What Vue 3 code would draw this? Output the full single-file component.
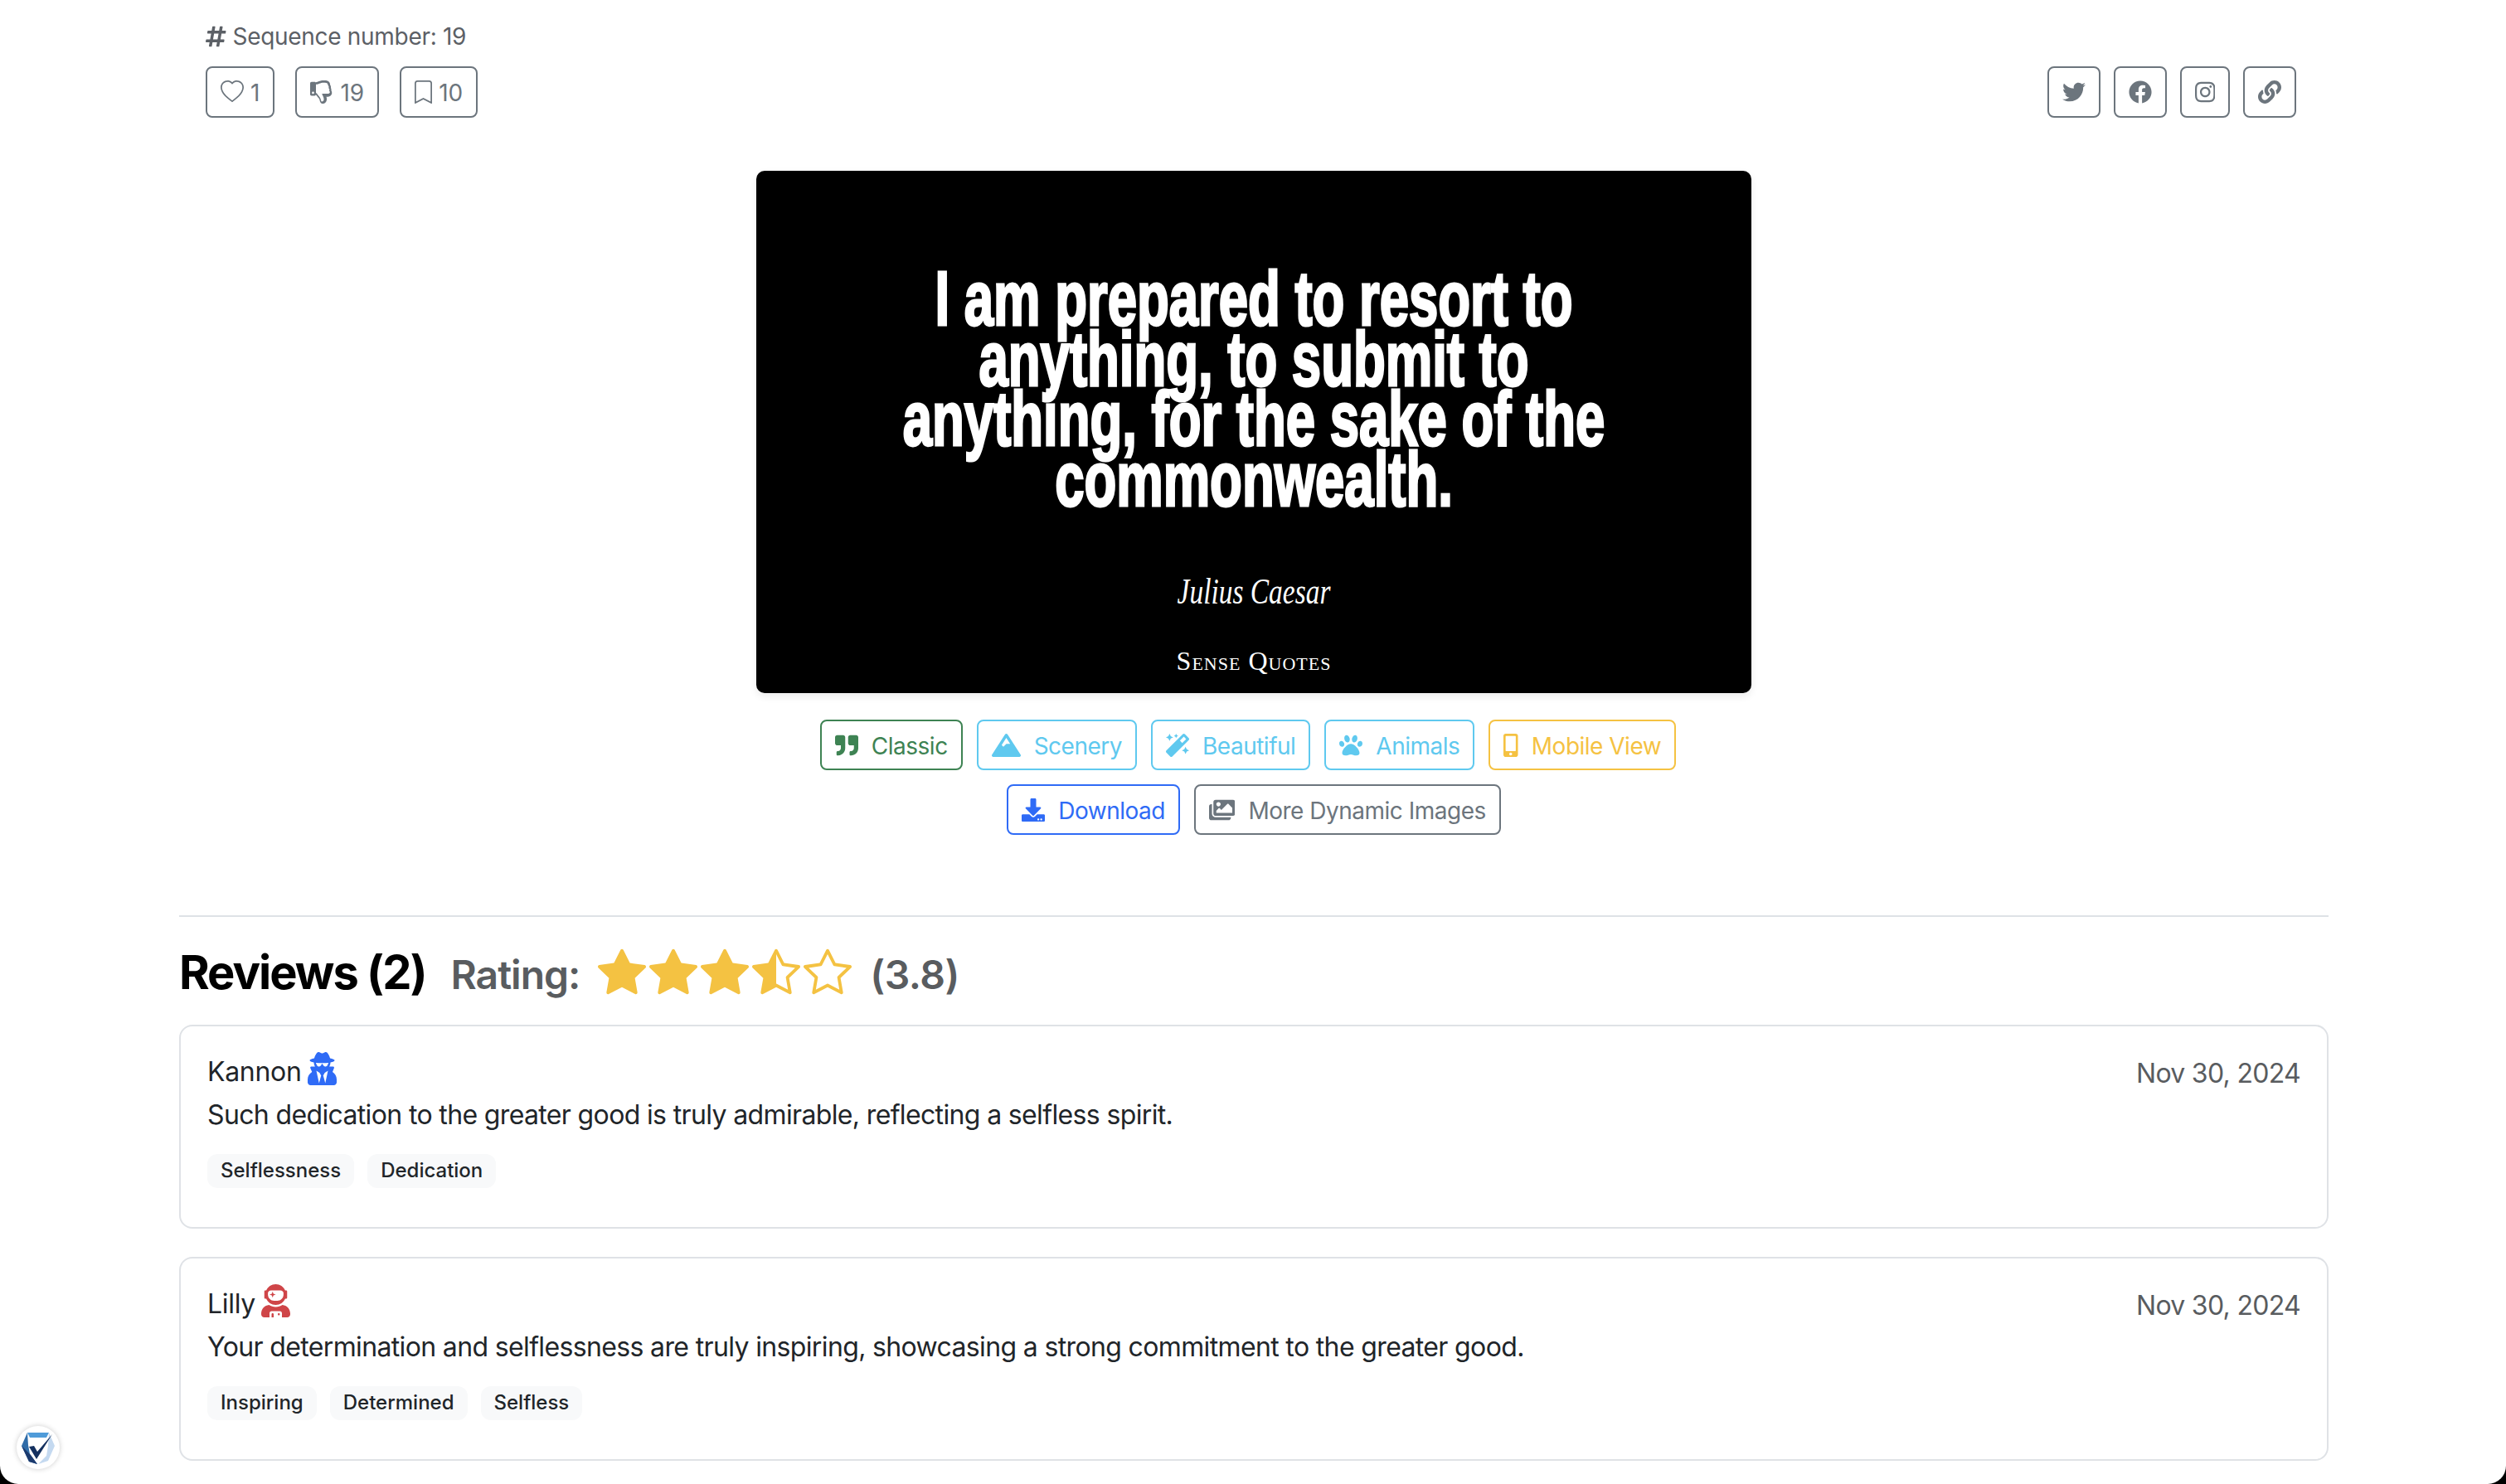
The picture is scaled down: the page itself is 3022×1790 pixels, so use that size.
<script setup>
const icons = {
  hash: [448, 512, 'M440.667 182.109l7.143-40c1.313-7.355-4.342-14.109-11.813-14.109h-74.81l14.623-81.891C377.123 38.754 371.468 32 363.997 32h-40.632a12 12 0 0 0-11.813 9.891L296.175 128H197.54l14.623-81.891C213.477 38.754 207.822 32 200.35 32h-40.632a12 12 0 0 0-11.813 9.891L132.528 128H53.432a12 12 0 0 0-11.813 9.891l-7.143 40C33.163 185.246 38.818 192 46.289 192h74.81L98.242 320H19.146a12 12 0 0 0-11.813 9.891l-7.143 40C-1.123 377.246 4.532 384 12.003 384h74.81L72.19 465.891C70.877 473.246 76.532 480 84.003 480h40.632a12 12 0 0 0 11.813-9.891L151.825 384h98.634l-14.622 81.891C234.523 473.246 240.178 480 247.65 480h40.632a12 12 0 0 0 11.813-9.891L315.472 384h79.096a12 12 0 0 0 11.813-9.891l7.143-40c1.313-7.355-4.342-14.109-11.813-14.109h-74.81l22.857-128h79.096a12 12 0 0 0 11.813-9.891zM261.889 320h-98.634l22.857-128h98.634l-22.857 128z'],
  heart: [16, 16, 'm8 2.748-.717-.737C5.6.281 2.514.878 1.4 3.053c-.523 1.023-.641 2.5.314 4.385.92 1.815 2.834 3.989 6.286 6.357 3.452-2.368 5.365-4.542 6.286-6.357.955-1.886.838-3.362.314-4.385C13.486.878 10.4.28 8.717 2.01L8 2.748zM8 15C-7.333 4.868 3.279-3.04 7.824 1.143c.06.055.119.112.176.171a3.12 3.12 0 0 1 .176-.17C12.72-3.042 23.333 4.867 8 15z'],
  thumbsDown: [512, 512, 'M466.27 225.31c4.674-22.647.864-44.538-8.99-62.99 2.958-23.868-4.021-48.565-17.34-66.99C438.986 39.423 404.117 0 327 0c-7 0-15 .01-22.22.01C201.195.01 168.997 40 128 40h-10.845c-5.64-4.975-13.042-8-21.155-8H32C14.327 32 0 46.327 0 64v240c0 17.673 14.327 32 32 32h64c11.842 0 22.175-6.438 27.708-16h7.052c19.146 16.953 46.013 60.653 68.76 83.4 13.667 13.667 10.153 108.6 71.76 108.6 57.58 0 95.27-31.936 95.27-104.73 0-18.41-3.93-33.73-8.85-46.54h36.48c48.602 0 85.82-41.565 85.82-85.58 0-19.15-4.96-34.99-13.73-49.84zM64 296c-13.255 0-24-10.745-24-24s10.745-24 24-24 24 10.745 24 24-10.745 24-24 24zM128 272V88h10.8c42 0 78-40 166-40H327c46 0 66 18 66 56 16 14 24 38 14 64 18 14 26 40 12 60 18 14 20 36 12 48-8 10-20 17-36 17H262c0 30 40 62 40 118 0 30-12 57-46 57-16 0-18-68-42-95-26-26-54-70-76-92H128z'],
  bookmark: [12, 16, 'M0 2a2 2 0 0 1 2-2h8a2 2 0 0 1 2 2v13.5a.5.5 0 0 1-.777.416L6 13.101.777 15.916A.5.5 0 0 1 0 15.5V2zm2-1a1 1 0 0 0-1 1v12.566l4.723-2.482a.5.5 0 0 1 .554 0L11 14.566V2a1 1 0 0 0-1-1H2z'],
  twitter: [512, 512, 'M459.37 151.716c.325 4.548.325 9.097.325 13.645 0 138.72-105.583 298.558-298.558 298.558-59.452 0-114.68-17.219-161.137-47.106 8.447.974 16.568 1.299 25.34 1.299 49.055 0 94.213-16.568 130.274-44.832-46.132-.975-84.792-31.188-98.112-72.772 6.498.974 12.995 1.624 19.818 1.624 9.421 0 18.843-1.3 27.614-3.573-48.081-9.747-84.143-51.98-84.143-102.985v-1.299c13.969 7.797 30.214 12.67 47.431 13.319-28.264-18.843-46.781-51.005-46.781-87.391 0-19.492 5.197-37.36 14.294-52.954 51.655 63.675 129.3 105.258 216.365 109.807-1.624-7.797-2.599-15.918-2.599-24.04 0-57.828 46.782-104.934 104.934-104.934 30.213 0 57.502 12.67 76.67 33.137 23.715-4.548 46.456-13.32 66.599-25.34-7.798 24.366-24.366 44.833-46.132 57.827 21.117-2.273 41.584-8.122 60.426-16.243-14.292 20.791-32.161 39.308-52.628 54.253z'],
  facebook: [512, 512, 'M504 256C504 119 393 8 256 8S8 119 8 256c0 123.78 90.69 226.38 209.25 245V327.69h-63V256h63v-54.64c0-62.15 37-96.48 93.67-96.48 27.14 0 55.52 4.84 55.52 4.84v61h-31.28c-30.8 0-40.41 19.12-40.41 38.73V256h68.78l-11 71.69h-57.78V501C413.31 482.38 504 379.78 504 256z'],
  instagram: [448, 512, 'M224.1 141c-63.6 0-114.9 51.3-114.9 114.9s51.3 114.9 114.9 114.9S339 319.5 339 255.9 287.7 141 224.1 141zm0 189.6c-41.1 0-74.7-33.5-74.7-74.7s33.5-74.7 74.7-74.7 74.7 33.5 74.7 74.7-33.6 74.7-74.7 74.7zm146.4-194.3c0 14.9-12 26.8-26.8 26.8-14.9 0-26.8-12-26.8-26.8s12-26.8 26.8-26.8 26.8 12 26.8 26.8zm76.1 27.2c-1.7-35.9-9.9-67.7-36.2-93.9-26.2-26.2-58-34.4-93.9-36.2-37-2.1-147.9-2.1-184.9 0-35.8 1.7-67.6 9.9-93.9 36.1s-34.4 58-36.2 93.9c-2.1 37-2.1 147.9 0 184.9 1.7 35.9 9.9 67.7 36.2 93.9s58 34.4 93.9 36.2c37 2.1 147.9 2.1 184.9 0 35.9-1.7 67.7-9.9 93.9-36.2 26.2-26.2 34.4-58 36.2-93.9 2.1-37 2.1-147.8 0-184.8zM398.8 388c-7.8 19.6-22.9 34.7-42.6 42.6-29.5 11.7-99.5 9-132.1 9s-102.7 2.6-132.1-9c-19.6-7.8-34.7-22.9-42.6-42.6-11.7-29.5-9-99.5-9-132.1s-2.6-102.7 9-132.1c7.8-19.6 22.9-34.7 42.6-42.6 29.5-11.7 99.5-9 132.1-9s102.7-2.6 132.1 9c19.6 7.8 34.7 22.9 42.6 42.6 11.7 29.5 9 99.5 9 132.1s2.7 102.7-9 132.1z'],
  link: [512, 512, 'M326.612 185.391c59.747 59.809 58.927 155.698.36 214.59-.11.12-.24.25-.36.37l-67.2 67.2c-59.27 59.27-155.699 59.262-214.96 0-59.27-59.26-59.27-155.7 0-214.96l37.106-37.106c9.84-9.84 26.786-3.3 27.294 10.606.648 17.722 3.826 35.527 9.69 52.721 1.986 5.822.567 12.262-3.783 16.612l-13.087 13.087c-28.026 28.026-28.905 73.66-1.155 101.96 28.024 28.579 74.086 28.749 102.325.51l67.2-67.19c28.191-28.191 28.073-73.757 0-101.83-3.701-3.694-7.429-6.564-10.341-8.569a16.037 16.037 0 0 1-6.947-12.606c-.396-10.567 3.348-21.456 11.698-29.806l21.054-21.055c5.521-5.521 14.182-6.199 20.584-1.731a152.482 152.482 0 0 1 20.522 17.197zM467.547 44.449c-59.261-59.262-155.69-59.27-214.96 0l-67.2 67.2c-.12.12-.25.25-.36.37-58.566 58.892-59.387 154.781.36 214.59a152.454 152.454 0 0 0 20.521 17.196c6.402 4.468 15.064 3.789 20.584-1.731l21.054-21.055c8.35-8.35 12.094-19.239 11.698-29.806a16.037 16.037 0 0 0-6.947-12.606c-2.912-2.005-6.64-4.875-10.341-8.569-28.073-28.073-28.191-73.639 0-101.83l67.2-67.19c28.239-28.239 74.3-28.069 102.325.51 27.75 28.3 26.872 73.934-1.155 101.96l-13.087 13.087c-4.35 4.35-5.769 10.79-3.783 16.612 5.864 17.194 9.042 34.999 9.69 52.721.509 13.906 17.454 20.446 27.294 10.606l37.106-37.106c59.271-59.259 59.271-155.699.001-214.959z'],
  quote: [512, 512, 'M464 32H336c-26.5 0-48 21.5-48 48v128c0 26.5 21.5 48 48 48h80v64c0 35.3-28.7 64-64 64h-8c-13.3 0-24 10.7-24 24v48c0 13.3 10.7 24 24 24h8c88.4 0 160-71.6 160-160V80c0-26.5-21.5-48-48-48zm-288 0H48C21.5 32 0 53.5 0 80v128c0 26.5 21.5 48 48 48h80v64c0 35.3-28.7 64-64 64h-8c-13.3 0-24 10.7-24 24v48c0 13.3 10.7 24 24 24h8c88.4 0 160-71.6 160-160V80c0-26.5-21.5-48-48-48z'],
  mountain: [640, 512, 'M634.92 462.7l-288-448C341.03 5.54 330.89 0 320 0s-21.03 5.54-26.92 14.7l-288 448a32.001 32.001 0 0 0-1.17 32.64A32.004 32.004 0 0 0 32 512h576c11.71 0 22.48-6.39 28.09-16.67a31.983 31.983 0 0 0-1.17-32.63zM320 91.18L405.39 224H320l-64 64-38.06-38.06L320 91.18z'],
  magic: [512, 512, 'M224 96l16-32 32-16-32-16-16-32-16 32-32 16 32 16 16 32zM80 160l26.66-53.33L160 80l-53.34-26.67L80 0 53.34 53.33 0 80l53.34 26.67L80 160zm352 128l-26.66 53.33L352 368l53.34 26.67L432 448l26.66-53.33L512 368l-53.34-26.67L432 288zm70.62-193.77L417.77 9.38C411.53 3.12 403.34 0 395.15 0c-8.19 0-16.38 3.12-22.63 9.38L9.38 372.52c-12.5 12.5-12.5 32.76 0 45.25l84.85 84.85c6.25 6.25 14.44 9.37 22.62 9.37 8.19 0 16.38-3.12 22.63-9.37l363.14-363.15c12.5-12.48 12.5-32.75 0-45.24zM359.45 203.46l-50.91-50.91 86.6-86.6 50.91 50.91-86.6 86.6z'],
  paw: [512, 512, 'M256 224c-79.41 0-192 122.76-192 200.25 0 34.9 26.81 55.75 71.74 55.75 48.84 0 81.09-25.08 120.26-25.08 39.51 0 71.85 25.08 120.26 25.08 44.93 0 71.74-20.85 71.74-55.75C448 346.76 335.41 224 256 224zm-147.28-12.61c-10.4-34.65-42.44-57.09-71.56-50.13-29.12 6.96-44.29 40.69-33.89 75.34 10.4 34.65 42.44 57.09 71.56 50.13 29.12-6.96 44.29-40.69 33.89-75.34zm84.72-20.78c30.94-8.14 46.42-49.94 34.58-93.36s-46.52-72.01-77.46-63.87-46.42 49.94-34.58 93.36c11.84 43.42 46.52 72.02 77.46 63.87zm281.39-29.34c-29.12-6.96-61.15 15.48-71.56 50.13-10.4 34.65 4.77 68.38 33.89 75.34 29.12 6.96 61.15-15.48 71.56-50.13 10.4-34.65-4.77-68.38-33.89-75.34zm-156.27 29.34c30.94 8.14 65.62-20.45 77.46-63.87 11.84-43.42-3.64-85.21-34.58-93.36s-65.62 20.45-77.46 63.87c-11.84 43.42 3.64 85.22 34.58 93.36z'],
  mobile: [320, 512, 'M272 0H48C21.5 0 0 21.5 0 48v416c0 26.5 21.5 48 48 48h224c26.5 0 48-21.5 48-48V48c0-26.5-21.5-48-48-48zM160 480c-17.7 0-32-14.3-32-32s14.3-32 32-32 32 14.3 32 32-14.3 32-32 32zm112-108c0 6.6-5.4 12-12 12H60c-6.6 0-12-5.4-12-12V60c0-6.6 5.4-12 12-12h200c6.6 0 12 5.4 12 12v312z'],
  download: [512, 512, 'M216 0h80c13.3 0 24 10.7 24 24v168h87.7c17.8 0 26.7 21.5 14.1 34.1L269.7 378.3c-7.5 7.5-19.8 7.5-27.3 0L90.1 226.1c-12.6-12.6-3.7-34.1 14.1-34.1H192V24c0-13.3 10.7-24 24-24zm296 376v112c0 13.3-10.7 24-24 24H24c-13.3 0-24-10.7-24-24V376c0-13.3 10.7-24 24-24h146.7l49 49c20.1 20.1 52.5 20.1 72.6 0l49-49H488c13.3 0 24 10.7 24 24zm-124 88c0-11-9-20-20-20s-20 9-20 20 9 20 20 20 20-9 20-20zm64 0c0-11-9-20-20-20s-20 9-20 20 9 20 20 20 20-9 20-20z'],
  images: [576, 512, 'M480 416v16c0 26.51-21.49 48-48 48H48c-26.51 0-48-21.49-48-48V176c0-26.51 21.49-48 48-48h16v208c0 44.112 35.888 80 80 80h336zm96-80V80c0-26.51-21.49-48-48-48H144c-26.51 0-48 21.49-48 48v256c0 26.51 21.49 48 48 48h384c26.51 0 48-21.49 48-48zM256 128c0 26.51-21.49 48-48 48s-48-21.49-48-48 21.49-48 48-48 48 21.49 48 48zm-96 144l55.515-55.515c4.686-4.686 12.284-4.686 16.971 0L272 256l135.515-135.515c4.686-4.686 12.284-4.686 16.971 0L512 208v112H160v-48z'],
  secret: [448, 512, 'M383.9 308.3l23.9-62.6c4-10.5-3.7-21.7-15-21.7h-58.5c11-18.9 17.8-40.6 17.8-64v-.3c39.2-7.8 64-19.1 64-31.7 0-13.3-27.3-25.1-70.1-33-9.2-32.8-27-65.8-40.6-82.8-9.5-11.9-25.9-15.6-39.5-8.8l-27.6 13.8c-9 4.5-19.6 4.5-28.6 0L182.1 3.4c-13.6-6.8-30-3.1-39.5 8.8-13.5 17-31.4 50-40.6 82.8-42.7 7.9-70 19.7-70 33 0 12.6 24.8 23.9 64 31.7v.3c0 23.4 6.8 45.1 17.8 64H56.3c-11.5 0-19.2 11.7-14.7 22.3l25.8 60.2C27.3 329.8 0 372.7 0 422.4v44.8C0 491.9 20.1 512 44.8 512h358.4c24.7 0 44.8-20.1 44.8-44.8v-44.8c0-48.4-25.8-90.4-64.1-114.1zM176 480l-41.6-192 49.6 32 24 40-32 120zm96 0l-32-120 24-40 49.6-32L272 480zm41.7-298.5c-3.9 11.9-7 24.6-16.5 33.4-10.1 9.3-48 22.4-64-25-2.8-8.4-15.4-8.4-18.3 0-17 50.2-56 32.4-64 25-9.5-8.8-12.7-21.5-16.5-33.4-.8-2.5-6.3-5.7-6.3-5.8v-10.8c28.3 3.6 61 5.8 96 5.8s67.7-2.1 96-5.8v10.8c-.1.1-5.6 3.2-6.4 5.8z'],
  astronaut: [448, 512, 'M64 224h13.5c24.7 56.5 80.9 96 146.5 96s121.8-39.5 146.5-96H384c8.8 0 16-7.2 16-16v-96c0-8.8-7.2-16-16-16h-13.5C345.8 39.5 289.6 0 224 0S102.2 39.5 77.5 96H64c-8.8 0-16 7.2-16 16v96c0 8.8 7.2 16 16 16zm40-88c0-22 21.5-40 48-40h144c26.5 0 48 18 48 40v24c0 53-43 96-96 96h-48c-53 0-96-43-96-96v-24zm72 72l12-36 36-12-36-12-12-36-12 36-36 12 36 12 12 36zm151.6 113.4C297.7 340.7 262.2 352 224 352s-73.7-11.3-103.6-30.6C52.9 328.5 0 385 0 454.4v9.6c0 26.5 21.5 48 48 48h80v-64c0-17.7 14.3-32 32-32h128c17.7 0 32 14.3 32 32v64h80c26.5 0 48-21.5 48-48v-9.6c0-69.4-52.9-125.9-120.4-133zM272 448c-8.8 0-16 7.2-16 16s7.2 16 16 16 16-7.2 16-16-7.2-16-16-16zm-96 0c-8.8 0-16 7.2-16 16v48h32v-48c0-8.8-7.2-16-16-16z'],
  star: [16, 16, 'M3.612 15.443c-.386.198-.824-.149-.746-.592l.83-4.73L.173 6.765c-.329-.314-.158-.888.283-.95l4.898-.696L7.538.792c.197-.39.73-.39.927 0l2.184 4.327 4.898.696c.441.062.612.636.282.95l-3.522 3.356.83 4.73c.078.443-.36.79-.746.592L8 13.187l-4.389 2.256z'],
  starHalf: [16, 16, 'M5.354 5.119 7.538.792A.516.516 0 0 1 8 .5c.183 0 .366.097.465.292l2.184 4.327 4.898.696A.537.537 0 0 1 16 6.32a.548.548 0 0 1-.17.445l-3.523 3.356.83 4.73c.078.443-.36.79-.746.592L8 13.187l-4.389 2.256a.52.52 0 0 1-.146.05c-.342.06-.668-.254-.6-.642l.83-4.73L.173 6.765a.55.55 0 0 1-.172-.403.58.58 0 0 1 .085-.302.513.513 0 0 1 .37-.245l4.898-.696zM8 12.027a.5.5 0 0 1 .232.056l3.686 1.894-.694-3.957a.565.565 0 0 1 .162-.505l2.907-2.77-4.052-.576a.525.525 0 0 1-.393-.288L8.001 2.223 8 2.226v9.8z'],
  starEmpty: [16, 16, 'M2.866 14.85c-.078.444.36.791.746.593l4.39-2.256 4.389 2.256c.386.198.824-.149.746-.592l-.83-4.73 3.522-3.356c.33-.314.16-.888-.282-.95l-4.898-.696L8.465.792a.513.513 0 0 0-.927 0L5.354 5.12l-4.898.696c-.441.062-.612.636-.283.95l3.523 3.356-.83 4.73zm4.905-2.767-3.686 1.894.694-3.957a.565.565 0 0 0-.163-.505L1.71 6.745l4.052-.576a.525.525 0 0 0 .393-.288L8 2.223l1.847 3.658a.525.525 0 0 0 .393.288l4.052.575-2.906 2.77a.565.565 0 0 0-.163.506l.694 3.957-3.686-1.894a.503.503 0 0 0-.461 0z'],
}

const counters = [
  { icon: 'heart', value: 1 },
  { icon: 'thumbsDown', value: 19 },
  { icon: 'bookmark', value: 10 },
]
const shares = ['twitter', 'facebook', 'instagram', 'link']
const styleRow = [
  { icon: 'quote', label: 'Classic', tone: 'green' },
  { icon: 'mountain', label: 'Scenery', tone: 'info' },
  { icon: 'magic', label: 'Beautiful', tone: 'info' },
  { icon: 'paw', label: 'Animals', tone: 'info' },
  { icon: 'mobile', label: 'Mobile View', tone: 'amber' },
]
const actionRow = [
  { icon: 'download', label: 'Download', tone: 'blue' },
  { icon: 'images', label: 'More Dynamic Images', tone: 'grey' },
]
const quoteLines = [
  'I am prepared to resort to',
  'anything, to submit to',
  'anything, for the sake of the',
  'commonwealth.',
]
const stars = ['star', 'star', 'star', 'starHalf', 'starEmpty']
const reviews = [
  {
    name: 'Kannon',
    icon: 'secret',
    tone: 'blue',
    date: 'Nov 30, 2024',
    text: 'Such dedication to the greater good is truly admirable, reflecting a selfless spirit.',
    tags: ['Selflessness', 'Dedication'],
  },
  {
    name: 'Lilly',
    icon: 'astronaut',
    tone: 'red',
    date: 'Nov 30, 2024',
    text: 'Your determination and selflessness are truly inspiring, showcasing a strong commitment to the greater good.',
    tags: ['Inspiring', 'Determined', 'Selfless'],
  },
]

const iconWidth = (name, height) => (icons[name][0] / icons[name][1]) * height
</script>

<template>
  <div class="screen">
    <div class="page">
      <div class="top">
        <div class="seq">
          <svg :viewBox="`0 0 ${icons.hash[0]} ${icons.hash[1]}`" :width="iconWidth('hash', 28)" height="28" fill="currentColor">
            <path :d="icons.hash[2]" />
          </svg>
          <span>Sequence number: 19</span>
        </div>
        <div class="actions">
          <div class="counters">
            <div v-for="c in counters" :key="c.icon" class="square">
              <svg :viewBox="`0 0 ${icons[c.icon][0]} ${icons[c.icon][1]}`" :width="iconWidth(c.icon, 28)" height="28" fill="currentColor" fill-rule="evenodd">
                <path :d="icons[c.icon][2]" />
              </svg>
              <span class="nudge">{{ c.value }}</span>
            </div>
          </div>
          <div class="shares">
            <div v-for="s in shares" :key="s" class="square">
              <svg :viewBox="`0 0 ${icons[s][0]} ${icons[s][1]}`" :width="iconWidth(s, 28)" height="28" fill="currentColor">
                <path :d="icons[s][2]" />
              </svg>
            </div>
          </div>
        </div>
      </div>

      <div class="poster">
        <div class="poster__quote">
          <div v-for="line in quoteLines" :key="line" class="poster__line">
            <span>{{ line }}</span>
          </div>
        </div>
        <div class="poster__author">Julius Caesar</div>
        <div class="poster__brand">Sense Quotes</div>
      </div>

      <div class="btn-rows">
        <div v-for="(row, i) in [styleRow, actionRow]" :key="i" class="btn-row">
          <div v-for="b in row" :key="b.label" class="btn" :class="`tone-${b.tone}`">
            <svg :viewBox="`0 0 ${icons[b.icon][0]} ${icons[b.icon][1]}`" :width="iconWidth(b.icon, 28)" height="28" fill="currentColor">
              <path :d="icons[b.icon][2]" />
            </svg>
            <span class="nudge">{{ b.label }}</span>
          </div>
        </div>
      </div>

      <div class="rule"></div>

      <div class="heading">
        <span class="heading__title">Reviews (2)</span>
        <span class="heading__rating heading__rating--label">Rating:</span>
        <span class="stars">
          <svg v-for="(s, i) in stars" :key="i" viewBox="0 0 16 16" width="58" height="58" fill="currentColor">
            <path :d="icons[s][2]" />
          </svg>
        </span>
        <span class="heading__rating heading__rating--score">(3.8)</span>
      </div>

      <div class="reviews">
        <div v-for="r in reviews" :key="r.name" class="review">
          <div class="review__main">
            <div class="review__name">
              <span>{{ r.name }}</span>
              <svg :class="`tone-${r.tone}`" :viewBox="`0 0 ${icons[r.icon][0]} ${icons[r.icon][1]}`" width="35" height="40" fill="currentColor">
                <path :d="icons[r.icon][2]" />
              </svg>
            </div>
            <div class="review__text">{{ r.text }}</div>
            <div class="review__tags">
              <span v-for="t in r.tags" :key="t" class="tag">{{ t }}</span>
            </div>
          </div>
          <div class="review__date">{{ r.date }}</div>
        </div>
      </div>
    </div>

    <div class="badge">
      <svg viewBox="0 0 52 52" width="52" height="52">
        <path d="M13 8h26l-3 6H16z" fill="#4f9bd9" />
        <path d="M13 8 6 24l9 19 10 3-9-12-2-11z" fill="#2f6ca8" />
        <path d="M39 8l7 16-8 18-12 4 10-10 2-12z" fill="#c4d9f0" />
        <path d="M6 24l9 19 10 3-8-11z" fill="#1c3a6e" />
        <path d="M15 25l9 15L43 10 25 31l-4-7z" fill="#14305f" />
      </svg>
    </div>
    <div class="corners"></div>
  </div>
</template>

<style>
html,
body {
  margin: 0;
  background: #fff;
}
</style>

<style scoped>
.screen {
  position: relative;
  width: 3022px;
  height: 1790px;
  overflow: hidden;
  background: #fff;
  font-family: Inter, "Liberation Sans", sans-serif;
  font-size: 32px;
  color: #212529;
}
.page {
  width: 2592px;
  margin-left: 216px;
}
.top {
  padding: 24px 39px 0 32px;
}
.seq {
  display: flex;
  align-items: center;
  gap: 8px;
  height: 40px;
  margin-bottom: 16px;
  font-size: 28px;
  letter-spacing: -0.3px;
  color: #5c6066;
}
.actions {
  display: flex;
  justify-content: space-between;
}
.counters {
  display: flex;
  gap: 25px;
}
.shares {
  display: flex;
  gap: 16px;
}
.square {
  display: flex;
  align-items: center;
  gap: 8px;
  height: 62px;
  box-sizing: border-box;
  padding: 0 16px;
  border: 2px solid #6c757d;
  border-radius: 8px;
  font-size: 28px;
  color: #6c757d;
}
.nudge {
  padding-top: 2px;
}
.poster {
  box-sizing: border-box;
  width: 1200px;
  height: 630px;
  margin: 64px auto 0;
  padding-top: 118px;
  background: #000;
  border-radius: 10px;
  box-shadow: 0 4px 10px rgba(0, 0, 0, 0.08);
  color: #fff;
  text-align: center;
}
.poster__line {
  display: flex;
  justify-content: center;
  font-family: "Liberation Sans", sans-serif;
  font-weight: 700;
  font-size: 92px;
  line-height: 72.5px;
  white-space: nowrap;
  transform: scaleX(0.69);
  -webkit-text-stroke: 3px #fff;
}
.poster__author {
  margin-top: 70px;
  font-family: "Liberation Serif", serif;
  font-style: italic;
  font-size: 44px;
  line-height: 60px;
  transform: scaleX(0.76);
}
.poster__brand {
  margin-top: 36px;
  font-family: "Liberation Serif", serif;
  font-variant: small-caps;
  font-size: 32px;
  line-height: 34px;
  letter-spacing: 1px;
}
.btn-rows {
  display: flex;
  flex-direction: column;
  gap: 17px;
  margin-top: 32px;
}
.btn-row {
  display: flex;
  justify-content: center;
  gap: 17px;
}
.btn-row:first-child {
  padding-right: 14px;
}
.btn {
  display: flex;
  align-items: center;
  gap: 16px;
  height: 61px;
  box-sizing: border-box;
  padding: 0 16px;
  border: 2px solid currentColor;
  border-radius: 8px;
  font-size: 28px;
  letter-spacing: -0.5px;
}
.tone-green {
  color: #3e8353;
}
.tone-info {
  color: #5fc9ef;
}
.tone-amber {
  color: #f5c242;
}
.tone-blue {
  color: #2f6bf6;
}
.tone-grey {
  color: #6c757d;
}
.tone-red {
  color: #cf4548;
}
.rule {
  height: 2px;
  margin-top: 97px;
  background: #dee2e6;
}
.heading {
  display: flex;
  align-items: baseline;
  height: 68px;
  margin: 33px 0 29px;
  line-height: 68px;
}
.heading__title {
  margin-right: 30px;
  font-size: 56px;
  font-weight: 700;
  letter-spacing: -2px;
  color: #000;
}
.heading__rating {
  font-size: 48px;
  font-weight: 600;
  color: #595c5f;
}
.heading__rating--label {
  letter-spacing: -1px;
}
.heading__rating--score {
  letter-spacing: -0.5px;
}
.stars {
  display: flex;
  align-self: center;
  gap: 4px;
  margin: 0 22px 3px 22px;
  color: #f4c242;
}
.reviews {
  display: flex;
  flex-direction: column;
  gap: 34px;
}
.review {
  display: flex;
  justify-content: space-between;
  box-sizing: border-box;
  height: 246px;
  padding: 31px 32px 0;
  border: 2px solid #dfe2e6;
  border-radius: 16px;
}
.review__name {
  display: flex;
  gap: 7px;
  height: 48px;
  margin-bottom: 4px;
  line-height: 48px;
  letter-spacing: -0.3px;
}
.review__text {
  line-height: 48px;
  letter-spacing: -0.64px;
}
.review__tags {
  display: flex;
  gap: 16px;
  margin-top: 23px;
}
.tag {
  height: 41px;
  padding: 0 16px;
  border-radius: 12px;
  background: #f8f9fa;
  font-size: 24px;
  font-weight: 500;
  line-height: 39px;
}
.review__date {
  margin-top: 2px;
  line-height: 48px;
  letter-spacing: -0.7px;
  color: #595c5f;
}
.badge {
  position: absolute;
  left: 20px;
  top: 1720px;
  width: 52px;
  height: 52px;
  border-radius: 50%;
  background: #fff;
  box-shadow: 0 0 6px rgba(0, 0, 0, 0.2);
}
.corners {
  position: absolute;
  inset: 0;
  border-radius: 0 0 22px 22px;
  box-shadow: 0 0 0 30px #000;
  pointer-events: none;
}
</style>
